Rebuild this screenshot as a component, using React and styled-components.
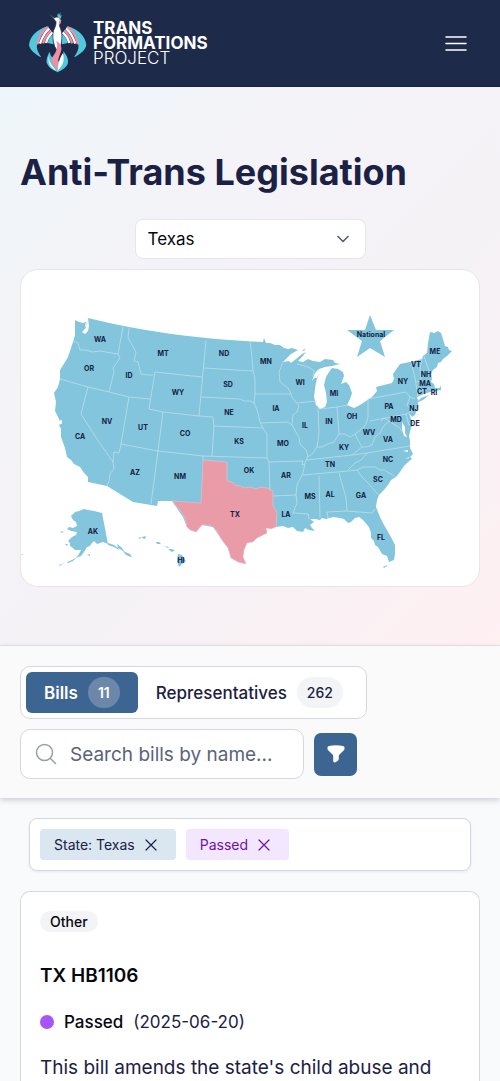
import React, { useState } from "react";
import styled, { createGlobalStyle } from "styled-components";

const color = {
  navy: "#1e2a4a",
  ink: "#1a2145",
  blue: "#3d6591",
  state: "#83c5dd",
  selected: "#e99ca8",
  line: "#d5d8e0",
  softLine: "#e6e6ec",
};

const GlobalStyle = createGlobalStyle`
  *, *::before, *::after { box-sizing: border-box; }
  body { margin: 0; background: #f9fafc; color: ${color.ink}; font-family: Inter, "Liberation Sans", sans-serif; }
  h1, h2, p { margin: 0; }
  button, input, select { font: inherit; color: inherit; }
  button { cursor: pointer; }
`;

const Header = styled.header`
  display: flex;
  align-items: center;
  justify-content: space-between;
  height: 87px;
  padding: 0 32px 0 28px;
  background: ${color.navy};
  border-bottom: 1px solid #18213d;
`;

const Brand = styled.a`
  display: flex;
  align-items: center;
  gap: 5px;
  color: #fff;
  text-decoration: none;
`;

const BrandName = styled.span`
  display: flex;
  flex-direction: column;
  font-size: 17px;
  line-height: 15px;
  font-weight: 700;
`;

const BrandLight = styled.span`
  font-weight: 300;
`;

const MenuButton = styled.button`
  display: flex;
  padding: 0;
  border: 0;
  background: none;
  color: #fff;
`;

const Hero = styled.section`
  display: flex;
  flex-direction: column;
  align-items: center;
  gap: 10px;
  padding: 60px 20px 58px;
  background: linear-gradient(135deg, #eef6fa 0%, #f4f3f7 30%, #f5f2f6 60%, #fff0f2 100%);
  border-bottom: 1px solid ${color.softLine};
`;

const Title = styled.h1`
  align-self: stretch;
  margin-bottom: 12px;
  font-size: 36px;
  line-height: 50px;
  font-weight: 700;
  color: ${color.ink};
`;

const SelectWrap = styled.div`
  display: grid;
  align-items: center;
  width: 50%;
  min-width: 231px;
  > * { grid-area: 1 / 1; }
  > svg { justify-self: end; margin-right: 16px; pointer-events: none; }
`;

const StateSelect = styled.select`
  appearance: none;
  width: 100%;
  height: 40px;
  padding: 0 12px;
  border: 1px solid ${color.softLine};
  border-radius: 8px;
  background: #fff;
  font-size: 17px;
  color: #05070f;
`;

const MapCard = styled.div`
  width: 100%;
  border: 1px solid ${color.softLine};
  border-radius: 18px;
  background: #fff;
  overflow: hidden;
  > svg { display: block; width: 100%; height: auto; }
`;

const Toolbar = styled.section`
  position: relative;
  display: flex;
  flex-direction: column;
  align-items: flex-start;
  gap: 10px;
  padding: 20px 20px 19px;
  background: #fafafb;
  box-shadow: 0 2px 6px rgba(20, 25, 45, 0.2);
`;

const Tabs = styled.div`
  display: flex;
  padding: 5px;
  border: 1px solid ${color.line};
  border-radius: 10px;
  background: #fff;
`;

const Tab = styled.button`
  display: flex;
  align-items: center;
  gap: 10px;
  height: 41px;
  padding: 0 18px;
  border: 0;
  border-radius: 6px;
  font-size: 17px;
  font-weight: ${(p) => (p.$active ? 600 : 500)};
  background: ${(p) => (p.$active ? color.blue : "transparent")};
  color: ${(p) => (p.$active ? "#fff" : color.ink)};
`;

const Count = styled.span`
  min-width: 31px;
  padding: 0 10px;
  border-radius: 16px;
  font-size: 14px;
  line-height: 31px;
  font-weight: ${(p) => (p.$active ? 600 : 500)};
  background: ${(p) => (p.$active ? "#6c87aa" : "#f3f4f6")};
`;

const SearchRow = styled.div`
  display: flex;
  align-items: center;
  gap: 10px;
`;

const SearchBox = styled.label`
  display: flex;
  align-items: center;
  gap: 12px;
  width: 284px;
  height: 50px;
  padding: 0 13px;
  border: 1px solid ${color.line};
  border-radius: 10px;
  background: #fff;
  > svg { flex: none; }
`;

const SearchInput = styled.input`
  flex: 1;
  min-width: 0;
  padding: 0;
  border: 0;
  outline: 0;
  background: none;
  font-size: 19px;
  appearance: none;
  &::placeholder { color: #59637a; opacity: 1; }
`;

const FilterButton = styled.button`
  display: grid;
  place-items: center;
  width: 43px;
  height: 43px;
  padding: 0;
  border: 0;
  border-radius: 7px;
  background: ${color.blue};
`;

const Results = styled.main`
  display: flex;
  flex-direction: column;
  gap: 20px;
  padding: 20px 20px 0;
`;

const ActiveFilters = styled.div`
  display: flex;
  flex-wrap: wrap;
  gap: 10px;
  margin: 0 9px;
  padding: 10px;
  border: 1px solid ${color.line};
  border-radius: 8px;
  background: #fff;
  box-shadow: 0 1px 3px rgba(20, 25, 45, 0.08);
`;

const FilterChip = styled.button`
  display: flex;
  align-items: center;
  gap: 9px;
  height: 31px;
  padding: 0 18px 0 14px;
  border: 0;
  border-radius: 4px;
  font-size: 14px;
  background: ${(p) => (p.$purple ? "#f3e6ff" : "#dae6f0")};
  color: ${(p) => (p.$purple ? "#6d11ad" : color.ink)};
`;

const BillCard = styled.article`
  display: flex;
  flex-direction: column;
  align-items: flex-start;
  padding: 19px 19px 0;
  border: 1px solid ${color.line};
  border-bottom: 0;
  border-radius: 10px 10px 0 0;
  background: #fff;
`;

const Category = styled.span`
  padding: 0 10px;
  border-radius: 11px;
  background: #f3f4f6;
  font-size: 14px;
  line-height: 21px;
  font-weight: 500;
  color: #05070f;
`;

const BillTitle = styled.h2`
  margin: 30px 0 20px;
  font-size: 19px;
  line-height: 28px;
  font-weight: 600;
  color: #05070f;
`;

const Status = styled.div`
  display: flex;
  align-items: center;
  gap: 10px;
  font-size: 17px;
  line-height: 24px;
  &::before {
    content: "";
    width: 14px;
    height: 14px;
    border-radius: 50%;
    background: #a855f7;
  }
`;

const StatusName = styled.strong`
  font-weight: 500;
  color: #05070f;
`;

const Summary = styled.p`
  margin-top: 20px;
  font-size: 19px;
  line-height: 28px;
  color: ${color.ink};
`;

const MapLabel = styled.text`
  font-family: Inter, sans-serif;
  font-size: 7px;
  font-weight: 700;
  fill: #14203f;
  text-anchor: middle;
`;

const LAND =
  "M75 320L79 322 83 323 86 322 87 326 84 330 82 332 85 334 88 331 89 326 88 318Q168 338 263 342L264 338 266 343 270 343 275 345 280 345 284 348 288 349 292 348 298 350 291 354 287 358 283 362 289 361 291 363 296 359 302 354 306 352 302 357 298 361 303 362 308 359 313 361 320 362 325 359 333 360 335 363 340 364 332 366 325 367 319 369 315 373 312 381 316 376 319 373 316 382 315 389 314 397 316 405 320 409 325 407 327 402 326 393 324 385 326 377 329 372 332 368 338 369 343 372 344 376 341 384 346 382 349 385 352 393 350 399 347 405 354 408 360 405 372 397 377 391 376 387 384 385 392 383 394 379 393 374 400 364 410 362 422 359 423 356 427 353 428 343 430 332 434 333 438 331 441 333 443 339 445 346 448 347 449 350 452 351 447 356 443 359 441 362 438 363 437 367 433 370 431 374 432 379 431 382 434 384 435 388 440 388 441 385 441 390 435 391 430 392 424 394 417 397 418 400 418 407 415 415 412 417 409 413 411 419 413 423 411 428 409 436 410 441 410 448 413 454 410 457 412 459 408 462 404 466 400 472 396 477 391 480 388 485 383 491 379 495 377 500 376 507 380 517 384 525 387 530 392 539 395 545 395 554 394 560 389 562 387 556 382 554 378 547 375 545 374 541 371 538 371 533 369 527 363 520 359 517 355 518 351 522 348 523 344 519 340 518 333 517 326 519 322 518 320 520 315 519 310 519 314 522 310 525 312 528 315 531 309 530 305 528 303 532 297 531 293 527 288 528 283 526 276 527 266 528 267 533 257 538 247 543 244 550 243 557 246 564 238 562 231 558 228 548 220 537 213 527 202 525 196 532 187 527 183 517 172 501 158 501 157 506 133 502 107 486 88 482 88 477 84 473 80 467 74 464 71 460 67 457 65 448 61 437 61 429 59 425 61 424 59 419 55 411 56 402 54 393 58 387 60 379 60 370 65 362 68 357 71 348 73 342 75 335Z";

const TEXAS =
  "M203 460L227 462 227 481 232 482 235 485 240 486 245 488 250 487 256 489 260 487 267 488 273 491 273 505 277 513 276 527 271 529 266 528 267 533 257 538 253 542 247 543 244 550 243 557 246 564 238 562 231 558 228 548 224 543 220 537 217 531 213 527 209 525 202 525 196 532 190 530 187 527 185 518 180 510 172 501 201 503Z";

const BORDERS = [
  "M73 341L78 343 80 350 86 350 92 352 100 351 118 354 123 327",
  "M118 354L120 358 113 368 114 372 109 392",
  "M60 379L88 387 109 392 129 397 150 399",
  "M88 387L81 414 97 439 113 462 114 469 110 474 109 481 107 486",
  "M129 397L121 444 119 453 114 452 113 462",
  "M121 444L158 451 203 456 267 458",
  "M158 451L151 504",
  "M129 328L128 338 132 345 136 352 134 361 138 362 141 374 147 375 153 375",
  "M202 377L155 372 149 409 163 412 158 451",
  "M163 412L199 416 213 417 214 426 263 428",
  "M206 340L199 416",
  "M204 368L253 371",
  "M201 397L240 399 244 401 250 401 254 403",
  "M250 342L252 357 253 371 255 378 255 394 254 402 258 413 260 422 264 430 267 434 267 458 269 462 270 490",
  "M214 426L212 456",
  "M255 394L291 394",
  "M283 362L279 372 280 382 288 388 291 394 292 397 299 406 297 412 293 415 292 425 297 434 299 437 300 444 306 450 308 456 305 463 303 473 297 485 296 495 297 503 293 513 308 514 309 519",
  "M260 423L288 422 292 425",
  "M297 403L317 401",
  "M297 364L305 366 310 368 314 371 313 377",
  "M203 456L203 460",
  "M269 462L303 461 302 465 305 464",
  "M273 496L296 495",
  "M318 408L319 433 317 447",
  "M320 409L337 407 348 405",
  "M337 407L339 434",
  "M308 457L313 453 317 447 322 447 328 444 334 442 339 434 345 434 350 437 355 434 363 428 366 424 368 417 368 399 406 392 410 397 415 399",
  "M370 421L406 414 412 411 407 405 410 397",
  "M307 460L352 455 367 453 410 446",
  "M303 475L348 471 357 470 363 467 375 467 380 470 384 470 396 477",
  "M348 470L355 463 361 460 367 453",
  "M357 470L362 477 368 483 375 491 379 495",
  "M339 473L346 498 347 511 372 513 375 509",
  "M347 511L327 512 328 518",
  "M319 476L320 518",
  "M352 455L362 447 358 440 355 434",
  "M362 447L367 447 372 445 375 437 380 433 383 427 389 421 384 418 381 421",
  "M389 421L395 425 400 428 403 433",
  "M411 362L413 370 415 378 417 390 418 397",
  "M422 359L420 368 421 381",
  "M424 356L428 368 432 377",
  "M416 382L431 380",
  "M417 390L430 388",
  "M406 414L409 425 413 424",
];

const ALASKA =
  "M71 516L75 512 79 511 84 509 88 510 94 511 102 513 108 544 103 542 97 544 94 541 92 543 90 546 87 547 84 552 81 556 76 558 79 554 81 550 75 550 73 548 70 546 70 543 68 541 72 537 76 535 77 532 71 531 67 529 69 527 73 528 77 526 76 522 73 520Z M87 555l3-1 0 2z M108 543l6 2 4 3 1 2-5-3-6-2z M117 544l4 3 4 5 5 2 2 3-1 0-5-2-3-4-5-3z M77 557l-4 4-5 2-1-1 5-2z M65 563l-6 3 0-1z M60 531l4 1-2 1z M65 544l3 0-1 2z M37 565l4 1z M21 554l2 0 0 1z";

const HAWAII =
  "M138 538l3-1-1 2z M142 537l4-1-1 3-3-1z M156 542l3 0 2 2-4 0z M164 546l5 1-1 1z M168 549l3 0 4 1-3 2z M178 554l4 1 4 6-4 3-3 3-2-6z";

const WATER =
  "M402 422L405 427 405 433 407 437 404 436 402 429Z M408 452l-5-1 5-1z M405 459l4-2 0 1z M85 323l1 6-3 4 4-2 1-5z M59 421l3-1 0 4-2 0z M318 371l-3 7 2 0 3-7z";

const LABELS = [
  ["WA", 100, 342], ["OR", 89, 371], ["ID", 129, 378], ["MT", 163, 356], ["ND", 224, 356],
  ["MN", 266, 364], ["SD", 228, 387], ["WY", 178, 395], ["WI", 300, 385], ["MI", 334, 396],
  ["NV", 107, 424], ["UT", 143, 430], ["CO", 185, 436], ["NE", 229, 415], ["IA", 276, 411],
  ["IL", 305, 428], ["IN", 329, 424], ["OH", 352, 419], ["PA", 389, 409], ["NY", 403, 384],
  ["VT", 416, 367], ["NH", 426, 377], ["MA", 425, 386], ["CT", 422, 394], ["RI", 434, 395],
  ["ME", 435, 354], ["NJ", 414, 411], ["MD", 396, 422], ["DE", 415, 426], ["WV", 369, 435],
  ["VA", 388, 442], ["KY", 344, 450], ["KS", 239, 444], ["MO", 283, 446], ["CA", 80, 439],
  ["AZ", 135, 475], ["NM", 180, 479], ["OK", 249, 473], ["AR", 286, 478], ["TN", 330, 467],
  ["NC", 388, 462], ["SC", 378, 482], ["MS", 310, 499], ["AL", 330, 497], ["GA", 361, 498],
  ["LA", 286, 517], ["TX", 235, 517], ["FL", 381, 540], ["AK", 93, 534], ["HI", 181, 563],
  ["National", 371, 337],
];

function Wing() {
  return (
    <>
      <path fill="#52c8dc" d="M84 70C50 78 30 102 27 125c1 14 18 29 37 38-8-12-15-24-13-37 2-20 15-40 37-50z" />
      <g fill="none" strokeWidth="7">
        <path stroke="#ee8fa5" d="M82 73C66 84 57 102 52 124" />
        <path stroke="#fff" d="M88 77C74 88 66 103 60 122" />
        <path stroke="#ee8fa5" d="M93 82C82 92 74 104 69 121" />
        <path stroke="#fff" d="M98 88C89 96 82 106 78 120" />
      </g>
      <path fill="#52c8dc" d="M101 92C92 98 86 106 83 120L100 124z" />
    </>
  );
}

function Phoenix() {
  return (
    <svg width="60" height="64" viewBox="24 24 180 192" aria-hidden="true">
      <Wing />
      <g transform="translate(226 0) scale(-1 1)">
        <Wing />
      </g>
      <path fill="#fff" stroke={color.navy} strokeWidth="2" d="M88 33l15 12c4-3 10-4 15-1 5 5 4 11 1 17-2 7 1 12 4 20 5 17 2 36-1 49l-9 16-9-16c-6-17-7-35-3-48 4-10 8-16 7-26-6-8-12-15-20-23z" />
      <path fill="#52c8dc" d="M112 38l2-9 3 8 4-10 0 12 4-4-3 12-7-3z" />
      <path fill="#ee8fa5" d="M119 47l5 5-3 11-5 3z" />
      <path fill="#52c8dc" d="M89 146c-8 14-12 28-7 37 5 12 16 17 31 25 15-8 24-13 30-25 4-11-2-26-13-38 1 12-3 22-13 30-16-5-26-14-28-29z" />
      <path fill="#fff" d="M87 156c-2 17 5 28 22 47-16-7-28-21-22-47zM128 151c8 20 0 38-16 53 3-18 4-33 16-53z" />
      <path fill="#ee8fa5" d="M109 113c15 9 17 20 14 32-4 15-12 23-9 57-14-12-24-26-17-39 7-12 20-24 12-50z" />
    </svg>
  );
}

function StateMap() {
  return (
    <svg viewBox="21 270 458 316" role="img" aria-label="Map of the United States">
      <path d={LAND} fill={color.state} />
      <path d={ALASKA} fill={color.state} />
      <path d={HAWAII} fill={color.state} />
      <path d="M416 403l5-5 8-3-6 5zM383 567l4-2 0 1-3 2zM302 351l4-3-2 3z" fill={color.state} />
      <path d={WATER} fill="#fff" />
      <path d="M370 315L376 330 394 330 380 341 385 357 370 348 357 357 362 341 347 330 365 330Z" fill={color.state} />
      <path d={BORDERS.join("")} fill="none" stroke="#c3e2ec" strokeWidth="0.7" strokeLinejoin="round" />
      <path d={TEXAS} fill={color.selected} stroke="#f3c9cf" strokeWidth="0.5" />
      {LABELS.map(([name, x, y]) => (
        <MapLabel key={name} x={x} y={y}>{name}</MapLabel>
      ))}
    </svg>
  );
}

function Close() {
  return (
    <svg width="14" height="14" viewBox="0 0 14 14" fill="none" stroke="currentColor" strokeWidth="1.2" strokeLinecap="round" aria-hidden="true">
      <path d="M2 2L12 12M12 2L2 12" />
    </svg>
  );
}

export default function App() {
  const [tab, setTab] = useState("Bills");
  return (
    <>
      <GlobalStyle />
      <Header>
        <Brand href="#home">
          <Phoenix />
          <BrandName>
            <span>TRANS</span>
            <span>FORMATIONS</span>
            <BrandLight>PROJECT</BrandLight>
          </BrandName>
        </Brand>
        <MenuButton aria-label="Open menu">
          <svg width="24" height="24" viewBox="0 0 24 24" fill="none" stroke="currentColor" strokeWidth="1.6" strokeLinecap="round">
            <path d="M2 6H22M2 12.500H22M2 19H22" />
          </svg>
        </MenuButton>
      </Header>

      <Hero>
        <Title>Anti-Trans Legislation</Title>
        <SelectWrap>
          <StateSelect aria-label="State" defaultValue="Texas">
            <option>Texas</option>
            <option>National</option>
          </StateSelect>
          <svg width="14" height="14" viewBox="0 0 14 14" fill="none" stroke="#59637a" strokeWidth="1.700" strokeLinecap="round" strokeLinejoin="round" aria-hidden="true">
            <path d="M2 4.500L7 9.500L12 4.500" />
          </svg>
        </SelectWrap>
        <MapCard>
          <StateMap />
        </MapCard>
      </Hero>

      <Toolbar>
        <Tabs role="tablist">
          {[["Bills", 11], ["Representatives", 262]].map(([name, count]) => (
            <Tab key={name} role="tab" aria-selected={tab === name} $active={tab === name} onClick={() => setTab(name)}>
              {name}
              <Count $active={tab === name}>{count}</Count>
            </Tab>
          ))}
        </Tabs>
        <SearchRow>
          <SearchBox>
            <svg width="24" height="24" viewBox="0 0 24 24" fill="none" stroke="#969dad" strokeWidth="1.500" strokeLinecap="round" aria-hidden="true">
              <circle cx="10.500" cy="10.500" r="8" />
              <path d="M16.500 16.500L21.500 21.500" />
            </svg>
            <SearchInput type="text" aria-label="Search bills" placeholder="Search bills by name..." />
          </SearchBox>
          <FilterButton aria-label="Filter bills">
            <svg width="20" height="20" viewBox="0 0 20 20" fill="#fff" aria-hidden="true">
              <path d="M3 2Q10 .6 17 2Q18.800 2.400 18.600 4.200Q18.600 5.500 17.600 6.500L13.500 10.500Q12.800 11.200 12.800 12.200V14.800Q12.800 16 11.800 16.700L9.400 18.200Q7.400 19 7.200 17V12.200Q7.200 11.200 6.500 10.500L2.400 6.500Q1.400 5.500 1.400 4.200Q1.200 2.400 3 2Z" />
            </svg>
          </FilterButton>
        </SearchRow>
      </Toolbar>

      <Results>
        <ActiveFilters>
          <FilterChip>State: Texas<Close /></FilterChip>
          <FilterChip $purple>Passed<Close /></FilterChip>
        </ActiveFilters>
        <BillCard>
          <Category>Other</Category>
          <BillTitle>TX HB1106</BillTitle>
          <Status>
            <StatusName>Passed</StatusName>
            <span>(2025-06-20)</span>
          </Status>
          <Summary>This bill amends the state's child abuse and</Summary>
        </BillCard>
      </Results>
    </>
  );
}
